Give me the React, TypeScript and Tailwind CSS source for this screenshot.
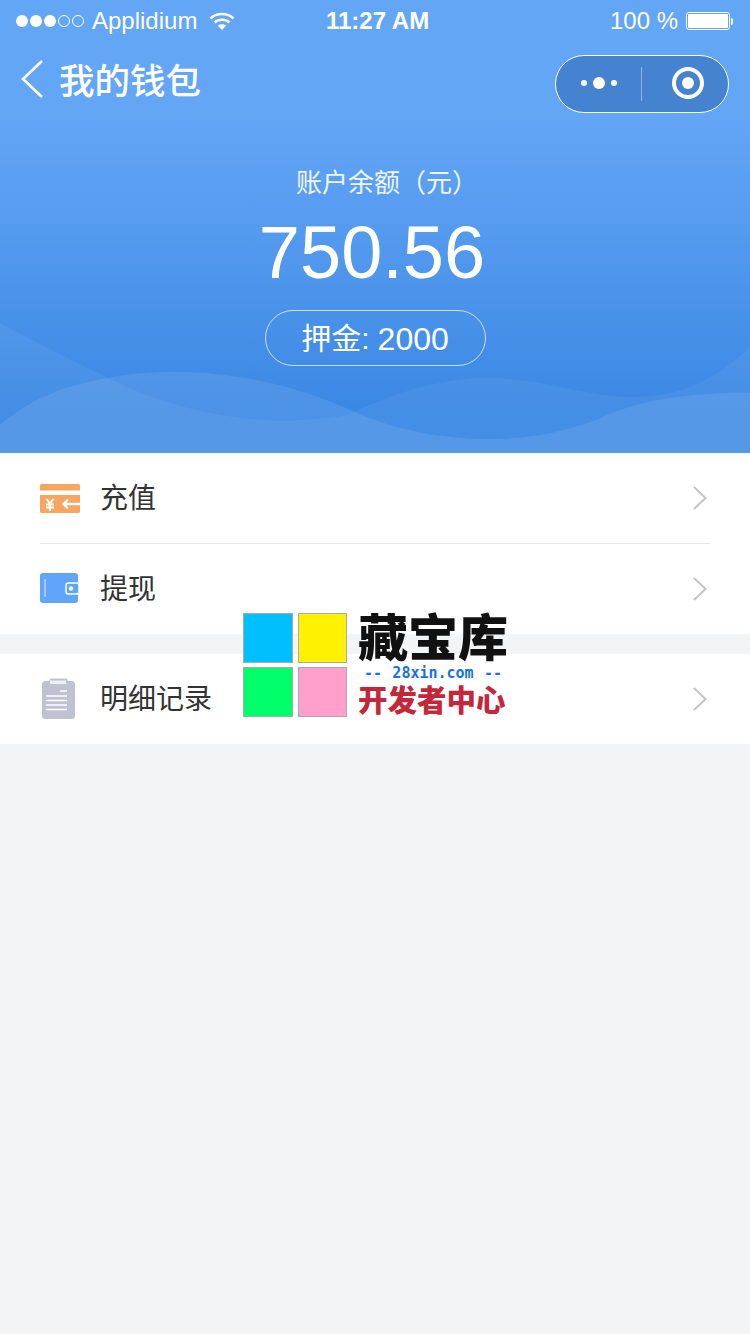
const rows1 = [
  { label: '充值', icon: <CardIcon /> },
  { label: '提现', icon: <WalletIcon /> },
];

function CardIcon() {
  return (
    <svg width="40" height="30" viewBox="0 0 40 30" className="block mt-[2px]">
      <path d="M1.500 0H38.500A1.500 1.500 0 0 1 40 1.500V6.500H0V1.500A1.500 1.500 0 0 1 1.500 0Z" fill="#f6a661" />
      <path d="M0 11H40V27.500A1.500 1.500 0 0 1 38.500 29H1.500A1.500 1.500 0 0 1 0 27.500Z" fill="#f6a661" />
      <path d="M6.500 15l3.500 4.500 3.500-4.500M10 19.500V27M6 20.500h8M6 23.500h8" stroke="#fff" strokeWidth="2" fill="none" />
      <path d="M40 20H24M28 15.500l-4.500 4.500 4.500 4.500" stroke="#fff" strokeWidth="2.400" fill="none" />
    </svg>
  );
}

function WalletIcon() {
  return (
    <svg width="40" height="30" viewBox="0 0 40 30" className="block -mt-[2px]">
      <rect x="0" y="0" width="38" height="30" rx="3" fill="#5fa5fb" />
      <path d="M5 6V24" stroke="#fff" strokeWidth="1" opacity="0.8" />
      <rect x="26" y="10" width="13" height="11" rx="2.500" fill="#5fa5fb" stroke="#fff" strokeWidth="1.500" />
      <circle cx="31" cy="15.500" r="2.200" fill="#fff" />
    </svg>
  );
}

function ClipboardIcon() {
  return (
    <svg width="40" height="42" viewBox="0 0 40 42" className="block">
      <rect x="2" y="3" width="33" height="38" rx="3.500" fill="#c0c1d3" />
      <path d="M10 3.500V2A1 1 0 0 1 11 1H26A1 1 0 0 1 27 2V3.500" fill="#c0c1d3" stroke="#c0c1d3" />
      <rect x="10" y="2.500" width="16" height="3.500" fill="#fff" opacity="0.75" />
      <path d="M20 13h7M6 18h21M6 22.500h21M6 27h21M6 31.500h21" stroke="#fff" strokeWidth="1.500" />
    </svg>
  );
}

function Chevron() {
  return (
    <svg width="16" height="26" viewBox="0 0 16 26" className="block" fill="none">
      <path d="M2 2L13.500 13 2 24" stroke="#c4c4c4" strokeWidth="2" />
    </svg>
  );
}

function Row({ label, icon }: { label: string; icon: React.ReactNode }) {
  return (
    <div className="h-[90px] flex items-center">
      <div className="w-10 mr-5 shrink-0">{icon}</div>
      <span className="flex-1 mt-[2px] text-[28px] leading-none text-[#333333]">{label}</span>
      <div className="mr-[2px]">
        <Chevron />
      </div>
    </div>
  );
}

export default function App() {
  return (
    <div className="relative w-[750px] min-h-[1334px] bg-[#f3f4f6] font-['Liberation_Sans','Noto_Sans_CJK_SC',sans-serif]">
      {/* Header */}
      <div className="relative h-[453px] overflow-hidden bg-gradient-to-b from-[#64a6f6] from-[25%] to-[#3b88e4] to-[90%] text-white">
        <svg className="absolute inset-0" width="750" height="453" viewBox="0 0 750 453">
          <path
            d="M0 323C40 345 72 360 108 378C170 410 250 424 300 420C330 418 345 417 355 412C400 390 450 376 498 378C550 381 590 397 632 397C680 397 715 380 750 347V453H0Z"
            fill="#fff"
            opacity="0.055"
          />
          <path
            d="M0 425C35 395 70 385 108 378C130 373 160 371 185 372C260 375 310 392 355 412C400 432 450 440 498 439C540 438 580 428 612 413C650 398 700 392 750 393V453H0Z"
            fill="#fff"
            opacity="0.09"
          />
        </svg>

        {/* Status bar */}
        <div className="relative h-10 flex items-center pl-4 pr-[17px] pt-[2px] text-[24px] leading-none">
          <div className="flex-1 flex items-center">
            <div className="flex gap-[2px]">
              <span className="w-3 h-3 rounded-full bg-white" />
              <span className="w-3 h-3 rounded-full bg-white" />
              <span className="w-3 h-3 rounded-full bg-white" />
              <span className="w-3 h-3 rounded-full border border-white" />
              <span className="w-3 h-3 rounded-full border border-white" />
            </div>
            <span className="ml-2">Applidium</span>
            <svg width="26" height="20" viewBox="0 0 26 20" className="ml-3" fill="none" stroke="#fff" strokeWidth="2.600">
              <path d="M1.500 7.500C7.500 1.500 18.500 1.500 24.500 7.500" />
              <path d="M5.500 11.500C9.500 7.800 16.500 7.800 20.500 11.500" />
              <path d="M13 19L8.700 14.600C11 12.800 15 12.800 17.300 14.600Z" fill="#fff" stroke="none" />
            </svg>
          </div>
          <span className="absolute left-[326px] font-bold">11:27 AM</span>
          <div className="flex items-center">
            <span>100 %</span>
            <div className="ml-2 w-[44px] h-[18px] border border-white rounded-[3px] p-[1px]">
              <div className="w-full h-full bg-white rounded-[1px]" />
            </div>
            <div className="w-[2px] h-[7px] bg-white rounded-r-sm ml-[1px]" />
          </div>
        </div>

        {/* Nav */}
        <div className="relative h-[58px] mt-[15px] pl-5 pr-[21px] flex items-center justify-between">
          <div className="flex items-center">
            <svg width="26" height="40" viewBox="0 0 26 40" fill="none" className="block mb-[10px]">
              <path d="M22 2L3 20 22 38" stroke="#fff" strokeWidth="2.600" />
            </svg>
            <span className="ml-[13px] mb-[2px] text-[35.500px] leading-none font-medium">我的钱包</span>
          </div>
          <div className="w-[174px] h-[58px] rounded-full border border-white bg-[#4582d0] flex items-center">
            <div className="w-[85px] mb-[2px] flex items-center justify-center gap-[6px]">
              <span className="w-[6px] h-[6px] rounded-full bg-white" />
              <span className="w-[12px] h-[12px] rounded-full bg-white" />
              <span className="w-[6px] h-[6px] rounded-full bg-white" />
            </div>
            <div className="w-px h-[34px] bg-white/40" />
            <div className="flex-1 mb-[2px] flex items-center justify-center pl-[5px]">
              <div className="w-8 h-8 rounded-full border-[4px] border-white flex items-center justify-center">
                <span className="w-3 h-3 rounded-full bg-white" />
              </div>
            </div>
          </div>
        </div>

        {/* Balance */}
        <div className="relative flex flex-col items-center">
          <p className="mt-[57px] ml-[24px] text-[26px] leading-none text-white/90 whitespace-nowrap">账户余额（元）</p>
          <p className="mt-[19px] mr-[6px] text-[74px] leading-[76px]">750.56</p>
          <div className="mt-[19px] w-[221px] h-14 rounded-full border border-white/70 flex items-center justify-center pt-[2px] text-[30px] leading-none">
            押金: <span className="ml-2 text-[32px]">2000</span>
          </div>
        </div>
      </div>

      {/* Menu */}
      <div className="bg-white px-10">
        <Row label={rows1[0].label} icon={rows1[0].icon} />
        <div className="h-px bg-[#e8e8e8]" />
        <Row label={rows1[1].label} icon={rows1[1].icon} />
      </div>
      <div className="mt-5 bg-white px-10">
        <Row label="明细记录" icon={<ClipboardIcon />} />
      </div>

      {/* Watermark */}
      <div className="absolute left-[243px] top-[613px] flex">
        <div className="grid grid-cols-2 gap-x-[5px] gap-y-[4px] w-[104px] h-[104px]">
          <div className="h-[50px] bg-[#00bfff] border border-[#aaaaaa]" />
          <div className="h-[50px] bg-[#fff200] border border-[#aaaaaa]" />
          <div className="h-[50px] bg-[#00ff6a] border border-[#aaaaaa]" />
          <div className="h-[50px] bg-[#ff9fcb] border border-[#aaaaaa]" />
        </div>
        <div className="ml-[11px] w-[150px]">
          <p className="mt-[1px] text-[50px] leading-[50px] font-black text-[#111111] whitespace-nowrap">藏宝库</p>
          <div className="mt-px flex items-center justify-between px-[6px] h-4 font-['DejaVu_Sans_Mono',monospace] text-[15px] leading-none font-bold text-[#1a72e0] whitespace-pre">
            <span>--</span>
            <span>28xin.com</span>
            <span>--</span>
          </div>
          <p className="mt-[4px] text-[29.500px] leading-[32px] font-black text-[#c4263a] whitespace-nowrap">开发者中心</p>
        </div>
      </div>
    </div>
  );
}
